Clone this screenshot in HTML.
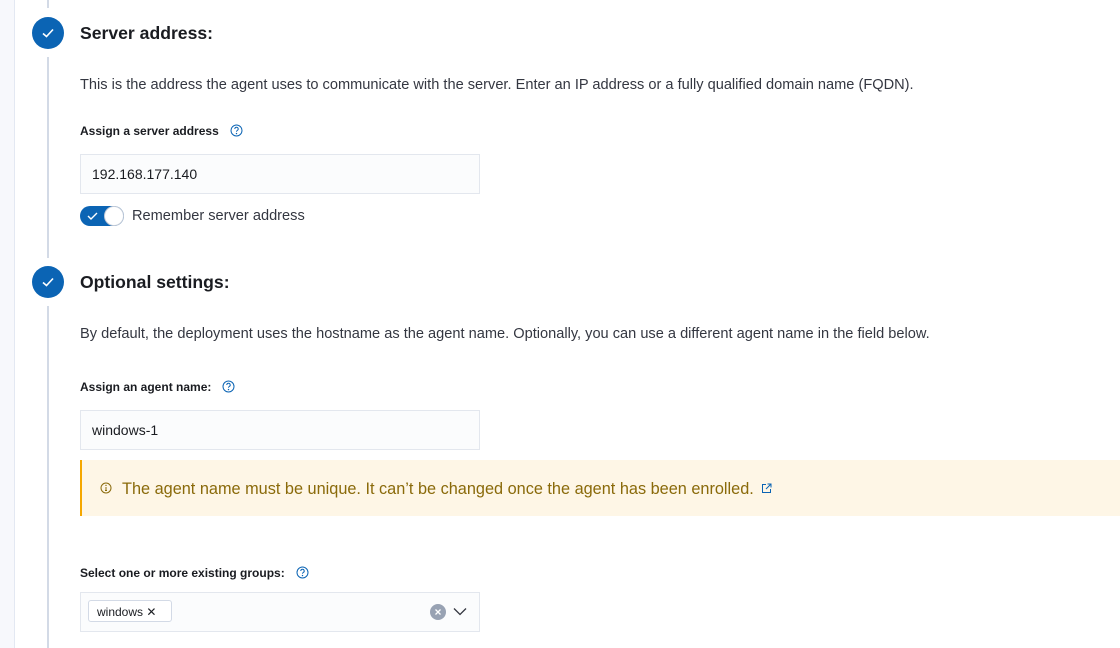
<!DOCTYPE html>
<html><head><meta charset="utf-8"><style>
*{margin:0;padding:0;box-sizing:border-box}
body{width:1120px;height:648px;overflow:hidden;background:#fff;font-family:"Liberation Sans",sans-serif;color:#343741;position:relative}
.a{position:absolute}
.side{left:0;top:0;width:15px;height:648px;background:#f7f8fc;border-right:1px solid #e3e8f2}
.line{left:47px;width:2px;background:#d3dae6}
.circ{left:32px;width:32px;height:32px;border-radius:50%;background:#0b64b4}
.circ svg{position:absolute;left:9px;top:10px}
h2{position:absolute;left:80px;font-size:17.6px;font-weight:bold;color:#1a1c21}
.p{left:80px;font-size:14.6px;color:#343741;white-space:nowrap}
.lbl{left:80px;font-size:12px;font-weight:bold;color:#1a1c21}
.inp{left:80px;width:400px;height:40px;background:#fbfcfd;border:1px solid #e3e7ee;font-size:14px;padding:11px 11px;color:#1a1c21}
</style></head><body>
<div class="a side"></div>
<div class="a line" style="top:0;height:8px"></div>
<div class="a line" style="top:57px;height:201px"></div>
<div class="a line" style="top:306px;height:342px"></div>
<div class="a circ" style="top:17px"><svg width="14" height="12" viewBox="0 0 14 12"><path d="M2 6.5l3.5 3L12 2.5" stroke="#fff" stroke-width="1.6" fill="none"/></svg></div>
<div class="a circ" style="top:266px"><svg width="14" height="12" viewBox="0 0 14 12"><path d="M2 6.5l3.5 3L12 2.5" stroke="#fff" stroke-width="1.6" fill="none"/></svg></div>
<h2 style="top:23px">Server address:</h2>
<div class="a p" style="top:77px">This is the address the agent uses to communicate with the server. Enter an IP address or a fully qualified domain name (FQDN).</div>
<div class="a lbl" style="top:124px">Assign a server address</div>
<svg class="a" style="left:230px;top:124px" width="13" height="13" viewBox="0 0 13 13"><circle cx="6.5" cy="6.5" r="5.5" stroke="#0b64b4" fill="none"/><path d="M4.8 5a1.7 1.7 0 1 1 2.4 1.5c-.5.3-.7.6-.7 1.2" stroke="#0b64b4" fill="none"/><circle cx="6.5" cy="9.6" r=".7" fill="#0b64b4"/></svg>
<div class="a inp" style="top:154px">192.168.177.140</div>
<div class="a" style="left:80px;top:206px;width:44px;height:20px;border-radius:10px;background:#0b64b4"></div>
<svg class="a" style="left:87px;top:211px" width="12" height="10" viewBox="0 0 12 10"><path d="M1 5l3 3 6-6" stroke="#fff" stroke-width="1.4" fill="none"/></svg>
<div class="a" style="left:104px;top:206px;width:20px;height:20px;border-radius:50%;background:#fff;border:1px solid #c5ccd8"></div>
<div class="a p" style="left:132px;top:208px">Remember server address</div>
<h2 style="top:272px">Optional settings:</h2>
<div class="a p" style="top:326px">By default, the deployment uses the hostname as the agent name. Optionally, you can use a different agent name in the field below.</div>
<div class="a lbl" style="top:380px">Assign an agent name:</div>
<svg class="a" style="left:222px;top:380px" width="13" height="13" viewBox="0 0 13 13"><circle cx="6.5" cy="6.5" r="5.5" stroke="#0b64b4" fill="none"/><path d="M4.8 5a1.7 1.7 0 1 1 2.4 1.5c-.5.3-.7.6-.7 1.2" stroke="#0b64b4" fill="none"/><circle cx="6.5" cy="9.6" r=".7" fill="#0b64b4"/></svg>
<div class="a inp" style="top:410px">windows-1</div>
<div class="a" style="left:80px;top:460px;width:1040px;height:56px;background:#fef6e6;border-left:2px solid #f5a700"></div>
<svg class="a" style="left:100px;top:482px" width="12" height="12" viewBox="0 0 12 12"><circle cx="6" cy="6" r="5" stroke="#8a6a0a" fill="none"/><path d="M6 5v3.5M5 8.5h2" stroke="#8a6a0a"/><circle cx="6" cy="3.4" r=".7" fill="#8a6a0a"/></svg>
<div class="a" style="left:122px;top:480px;font-size:16.3px;color:#8a6a0a;white-space:nowrap">The agent name must be unique. It can’t be changed once the agent has been enrolled.</div>
<svg class="a" style="left:761px;top:483px" width="11" height="11" viewBox="0 0 11 11"><path d="M5 1.5H1.5v8h8V6M6.5 1h3.5v3.5M10 1L5 6" stroke="#0b64b4" fill="none"/></svg>
<div class="a lbl" style="top:566px">Select one or more existing groups:</div>
<svg class="a" style="left:296px;top:566px" width="13" height="13" viewBox="0 0 13 13"><circle cx="6.5" cy="6.5" r="5.5" stroke="#0b64b4" fill="none"/><path d="M4.8 5a1.7 1.7 0 1 1 2.4 1.5c-.5.3-.7.6-.7 1.2" stroke="#0b64b4" fill="none"/><circle cx="6.5" cy="9.6" r=".7" fill="#0b64b4"/></svg>
<div class="a" style="left:80px;top:592px;width:400px;height:40px;background:#fbfcfd;border:1px solid #e3e7ee"></div>
<div class="a" style="left:88px;top:600px;width:84px;height:22px;background:#fff;border:1px solid #d3dae6;border-radius:3px;font-size:12px;color:#1a1c21;padding:4px 8px">windows ✕</div>
<div class="a" style="left:430px;top:604px;width:16px;height:16px;border-radius:50%;background:#98a2b3"></div>
<svg class="a" style="left:434px;top:608px" width="8" height="8" viewBox="0 0 8 8"><path d="M1.5 1.5l5 5M6.5 1.5l-5 5" stroke="#fff" stroke-width="1.3"/></svg>
<svg class="a" style="left:453px;top:607px" width="14" height="9" viewBox="0 0 14 9"><path d="M1 1.5l6 6 6-6" stroke="#343741" stroke-width="1.3" fill="none"/></svg>
</body></html>
